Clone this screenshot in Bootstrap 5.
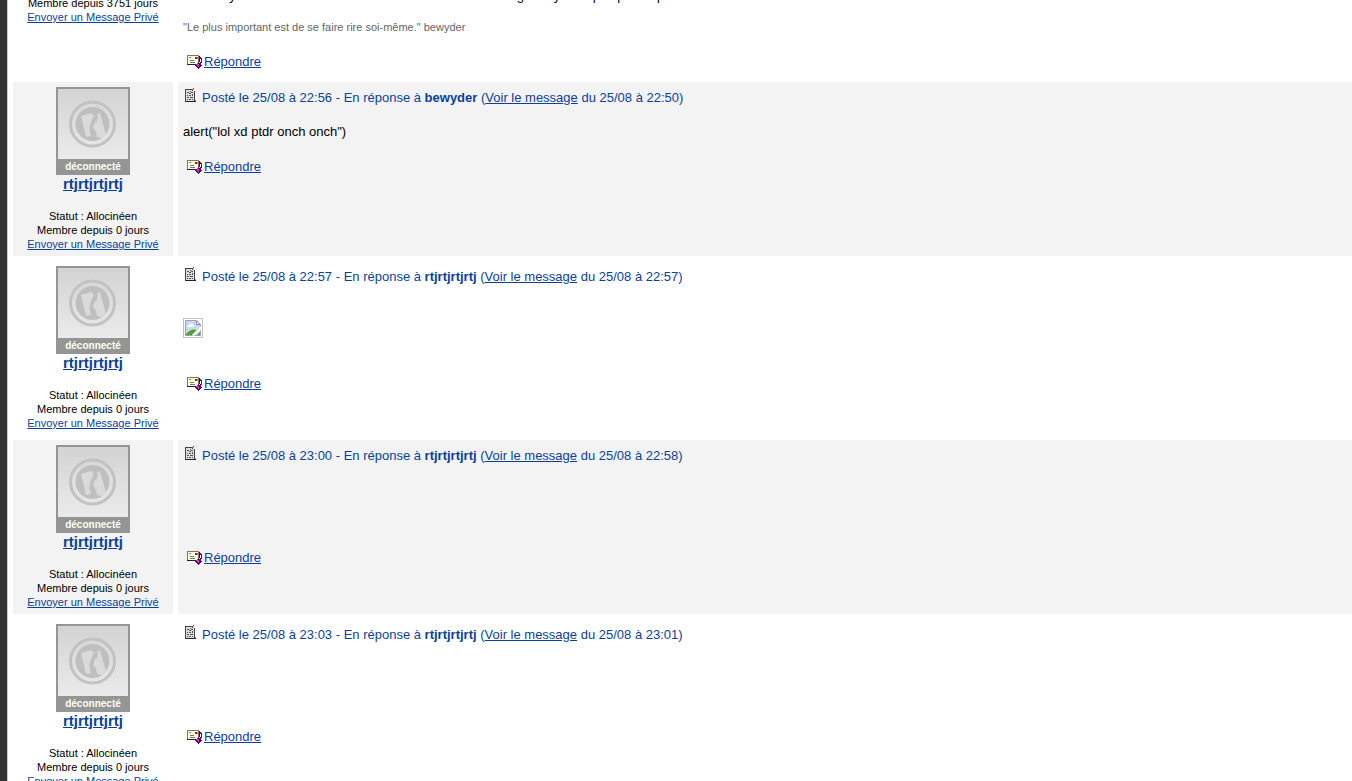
<!DOCTYPE html>
<html lang="fr">
<head>
<meta charset="utf-8">
<meta name="viewport" content="width=device-width, initial-scale=1">
<title>Forum</title>
<link href="https://cdn.jsdelivr.net/npm/bootstrap@5.3.0/dist/css/bootstrap.min.css" rel="stylesheet">
<style>
body{font-family:"Liberation Sans",Arial,sans-serif;font-size:13px;line-height:17px;color:#000;background:#333;padding-left:7px}
a,a:hover{color:#0a3f9f}
.page{background:#fff;border-left:1px solid #c8c8c8;padding-left:5px;min-height:100vh}
.thread{gap:5px;height:100vh}
.post{gap:5px}
.post.first{margin-top:-13px;min-height:90px}
.post.first .author{padding-top:9px}
.post.first .message{padding-top:0}
.author{width:160px;padding:5px 0;font-size:11px;line-height:14px}
.message{padding:5px;min-width:0}
.odd .author,.odd .message{background:#f3f3f3}
.avatar{width:74px;height:88px;border:2px solid #959595;border-bottom:0;background:linear-gradient(#d3d3d3,#f0f0f0)}
.state{height:16px;font-size:10px;line-height:15px;background:#959595;color:#fffff0;font-weight:bold}
.user{font-size:15px;line-height:17px;margin-bottom:17px;font-weight:bold}
.posted{height:20px;line-height:22px;color:#0a3f9f;gap:5px}
.body-text{margin:16px 0 17px}
.blank{min-height:50px}
.broken{padding:16px 0 19px}
.signature{font-size:11px;line-height:14px;color:#666;margin:16px 0 18px}
.reply{line-height:20px;padding-left:4px;gap:1px}
.reply svg{margin-top:3px}
svg{display:block;flex:none}
</style>
</head>
<body>
<svg width="0" height="0" class="position-absolute" aria-hidden="true">
<defs>
<symbol id="report" viewBox="0 0 13 16" shape-rendering="crispEdges">
<path fill="#999" d="M3 13h9v2H3z"/><path fill="#444" d="M1 2h8v1H1zM1 3h1v12H1zM10 4h1v10h-1z"/><path fill="#222" d="M2 14h10v1H2z"/>
<path fill="#dcdcdc" d="M2 3h8v11H2z"/>
<path fill="#555" d="M3 5h2v1H3zM6 4h1v1H6zM5 6h2v1H5zM7 5h2v1H7zM3 8h1v1H3zM5 8h2v1H5zM8 7h1v2H8zM3 10h2v1H3zM6 10h3v1H6zM3 12h1v1H3zM5 12h2v1H5zM8 12h1v1H8zM8 3h1v1H8z"/>
<path fill="#e00" d="M9 1h1v1H9zM8 2h1v1H8z"/>
</symbol>
<symbol id="reply" viewBox="0 0 16 15" shape-rendering="crispEdges">
<path fill="#777" d="M0 0h12v10H0z"/><path fill="#222" d="M0 9h8v1H0zM12 1h1v6h-1z"/><path fill="#ffffd8" d="M1 1h10v8H1z"/>
<path fill="#e55" d="M2 2h2v1H2z"/><path fill="#d00" d="M8 2h2v2H8z"/><path fill="#f90" d="M10 2h1v2h-1z"/>
<path fill="#679" d="M3 5h4v1H3zM3 7h5v1H3z"/>
<path fill="#606" d="M13 2h1v1h1v5h-1v2h1v1h-1v1h-1v1h-1v1h-1v-1h-1v-1H9v-1H8V9h2V8h1V7h1v1h1V7h1V4h-1z"/>
<path fill="#b4b" d="M10 8h1v1h1v3h-1v-1h-1v-1H9V9h1z"/>
</symbol>
<symbol id="logo" viewBox="0 0 70 70">
<circle cx="34.500" cy="35" r="22" fill="none" stroke="#c2c2c2" stroke-width="3"/>
<circle cx="34.500" cy="35" r="17" fill="#bfbfbf"/>
<path fill="#dadada" d="M23 27l10-3 3 3 6-3 6 22-4 3-5-1-1-6h-3l-2 5-5 1-4-17z"/>
<path fill="#bfbfbf" d="M36 27l4-1-1 6-2 1-2 6 2 2-1 5-3 1q-4-9 3-20z"/>
</symbol>
<symbol id="missing" viewBox="0 0 20 20">
<path fill="#fff" stroke="#c0c0c0" d="M.5.5h19v19H.5z"/><path fill="#c7d9f7" stroke="#a0a0a0" d="M2.500 2.500h11l4 4v11h-15z"/>
<path fill="#fff" d="M4 9q0-2 2-2 1-3 3-1 2 0 2 3zM13 3v4h4z"/><path fill="none" stroke="#888" d="M13.500 3v3.500H17"/>
<path fill="#4ca52b" d="M3 16q5-6 11-4l-5 5H3z"/><path fill="#fff" d="M18 8l-9 9 2 1 7-6z"/><path fill="#4ca52b" d="M14 17l3-3v3z"/>
</symbol>
</defs>
</svg>
<main class="page">
<div class="thread d-flex flex-column overflow-hidden">

<article class="post first d-flex flex-shrink-0">
<div class="author flex-shrink-0 text-center">
<div>Membre depuis 3751 jours</div><a href="#">Envoyer un Message Privé</a>
</div>
<div class="message flex-grow-1">
<div class="text-nowrap">Sinon il y a aussi des acteurs connus et des histoires une garde y sera pas parfait plus</div>
<div class="signature">"Le plus important est de se faire rire soi-même." bewyder</div>
<div class="reply d-flex"><svg width="16" height="15"><use href="#reply"/></svg><a href="#">Répondre</a></div>
</div>
</article>

<article class="post odd d-flex flex-shrink-0">
<div class="author flex-shrink-0 text-center">
<div class="avatar mx-auto"><svg width="70" height="70"><use href="#logo"/></svg><div class="state">déconnecté</div></div>
<div class="user"><a href="#">rtjrtjrtjrtj</a></div>
<div>Statut : Allocinéen</div><div>Membre depuis 0 jours</div><a href="#">Envoyer un Message Privé</a>
</div>
<div class="message flex-grow-1">
<div class="posted d-flex"><svg width="14" height="16"><use href="#report"/></svg><div>Posté le 25/08 à 22:56 - En réponse à <b>bewyder</b> (<a href="#">Voir le message</a> du 25/08 à 22:50)</div></div>
<div class="body-text">alert("lol xd ptdr onch onch")</div>
<div class="reply d-flex"><svg width="16" height="15"><use href="#reply"/></svg><a href="#">Répondre</a></div>
</div>
</article>

<article class="post d-flex flex-shrink-0">
<div class="author flex-shrink-0 text-center">
<div class="avatar mx-auto"><svg width="70" height="70"><use href="#logo"/></svg><div class="state">déconnecté</div></div>
<div class="user"><a href="#">rtjrtjrtjrtj</a></div>
<div>Statut : Allocinéen</div><div>Membre depuis 0 jours</div><a href="#">Envoyer un Message Privé</a>
</div>
<div class="message flex-grow-1">
<div class="posted d-flex"><svg width="14" height="16"><use href="#report"/></svg><div>Posté le 25/08 à 22:57 - En réponse à <b>rtjrtjrtjrtj</b> (<a href="#">Voir le message</a> du 25/08 à 22:57)</div></div>
<div class="body-text broken"><svg width="20" height="20"><use href="#missing"/></svg></div>
<div class="reply d-flex"><svg width="16" height="15"><use href="#reply"/></svg><a href="#">Répondre</a></div>
</div>
</article>

<article class="post odd d-flex flex-shrink-0">
<div class="author flex-shrink-0 text-center">
<div class="avatar mx-auto"><svg width="70" height="70"><use href="#logo"/></svg><div class="state">déconnecté</div></div>
<div class="user"><a href="#">rtjrtjrtjrtj</a></div>
<div>Statut : Allocinéen</div><div>Membre depuis 0 jours</div><a href="#">Envoyer un Message Privé</a>
</div>
<div class="message flex-grow-1">
<div class="posted d-flex"><svg width="14" height="16"><use href="#report"/></svg><div>Posté le 25/08 à 23:00 - En réponse à <b>rtjrtjrtjrtj</b> (<a href="#">Voir le message</a> du 25/08 à 22:58)</div></div>
<div class="body-text blank"></div>
<div class="reply d-flex"><svg width="16" height="15"><use href="#reply"/></svg><a href="#">Répondre</a></div>
</div>
</article>

<article class="post d-flex flex-shrink-0">
<div class="author flex-shrink-0 text-center">
<div class="avatar mx-auto"><svg width="70" height="70"><use href="#logo"/></svg><div class="state">déconnecté</div></div>
<div class="user"><a href="#">rtjrtjrtjrtj</a></div>
<div>Statut : Allocinéen</div><div>Membre depuis 0 jours</div><a href="#">Envoyer un Message Privé</a>
</div>
<div class="message flex-grow-1">
<div class="posted d-flex"><svg width="14" height="16"><use href="#report"/></svg><div>Posté le 25/08 à 23:03 - En réponse à <b>rtjrtjrtjrtj</b> (<a href="#">Voir le message</a> du 25/08 à 23:01)</div></div>
<div class="body-text blank"></div>
<div class="reply d-flex"><svg width="16" height="15"><use href="#reply"/></svg><a href="#">Répondre</a></div>
</div>
</article>

</div>
</main>
<script src="https://cdn.jsdelivr.net/npm/bootstrap@5.3.0/dist/js/bootstrap.bundle.min.js"></script>
</body>
</html>
